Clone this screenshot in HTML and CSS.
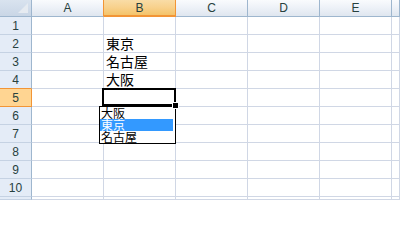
FILE: index.html
```html
<!DOCTYPE html>
<html lang="ja">
<head>
<meta charset="utf-8">
<link rel="stylesheet" href="styles.css">
</head>
<body>
<div class="sheet">
  <div class="hd corner"><span class="tri"></span></div>
  <div class="hd col before-sel">A</div>
  <div class="hd col sel">B</div>
  <div class="hd col">C</div>
  <div class="hd col">D</div>
  <div class="hd col">E</div>
  <div class="hd col"></div>

  <div class="rh">1</div><div class="c"></div><div class="c"></div><div class="c"></div><div class="c"></div><div class="c"></div><div class="c"></div>
  <div class="rh">2</div><div class="c"></div><div class="c txt">東京</div><div class="c"></div><div class="c"></div><div class="c"></div><div class="c"></div>
  <div class="rh">3</div><div class="c"></div><div class="c txt">名古屋</div><div class="c"></div><div class="c"></div><div class="c"></div><div class="c"></div>
  <div class="rh before-rsel">4</div><div class="c"></div><div class="c txt">大阪</div><div class="c"></div><div class="c"></div><div class="c"></div><div class="c"></div>
  <div class="rh rsel">5</div><div class="c"></div>
  <div class="c active">
    <span class="cursor"></span>
    <span class="handle"></span>
    <ul class="list">
      <li>大阪</li>
      <li class="on">東京</li>
      <li>名古屋</li>
    </ul>
  </div>
  <div class="c"></div><div class="c"></div><div class="c"></div><div class="c"></div>
  <div class="rh">6</div><div class="c"></div><div class="c"></div><div class="c"></div><div class="c"></div><div class="c"></div><div class="c"></div>
  <div class="rh">7</div><div class="c"></div><div class="c"></div><div class="c"></div><div class="c"></div><div class="c"></div><div class="c"></div>
  <div class="rh">8</div><div class="c"></div><div class="c"></div><div class="c"></div><div class="c"></div><div class="c"></div><div class="c"></div>
  <div class="rh">9</div><div class="c"></div><div class="c"></div><div class="c"></div><div class="c"></div><div class="c"></div><div class="c"></div>
  <div class="rh">10</div><div class="c"></div><div class="c"></div><div class="c"></div><div class="c"></div><div class="c"></div><div class="c"></div>
  <div class="rh"></div><div class="c"></div><div class="c"></div><div class="c"></div><div class="c"></div><div class="c"></div><div class="c"></div>
</div>
</body>
</html>
```
FILE: styles.css
```css
html, body {
  margin: 0;
  padding: 0;
  background: #ffffff;
  width: 400px;
  height: 200px;
  overflow: hidden;
}

.sheet {
  display: grid;
  grid-template-columns: 32px repeat(5, 72px) 1fr;
  grid-template-rows: 17px repeat(10, 18px) 1fr;
  width: 400px;
  height: 200px;
  font-family: "Liberation Sans", Arial, sans-serif;
}

.sheet > div {
  box-sizing: border-box;
}

.hd {
  background: linear-gradient(to bottom, #f9fbfd 0%, #eef2f8 45%, #dfe6ef 100%);
  border-right: 1px solid #9eb6ce;
  border-bottom: 1px solid #9eb6ce;
  color: #27413e;
  font-size: 12px;
  display: flex;
  align-items: center;
  justify-content: center;
  line-height: 1;
}

.corner {
  position: relative;
  background: linear-gradient(to bottom, #d9e3ef 0%, #c9d6e6 100%);
}

.corner .tri {
  position: absolute;
  right: 3px;
  bottom: 3px;
  width: 10px;
  height: 10px;
  background: #e6ebf1;
  clip-path: polygon(100% 0, 100% 100%, 0 100%);
}

.hd.before-sel {
  border-right-color: #f29536;
}

.hd.sel {
  background: linear-gradient(to bottom, #f9dca6 0%, #f8d08a 50%, #f3c266 100%);
  border-right-color: #f29536;
  border-bottom: 1px solid #f29536;
  box-shadow: inset 0 -1px 0 #f29536;
}

.rh {
  background: #e4ecf7;
  border-right: 1px solid #9eb6ce;
  border-bottom: 1px solid #c5d2e3;
  color: #27413e;
  font-size: 12px;
  display: flex;
  align-items: center;
  justify-content: center;
  line-height: 1;
}

.rh.before-rsel {
  border-bottom-color: #f29536;
}

.rh.rsel {
  background: #ffd592;
  border-right-color: #f29536;
  border-bottom-color: #f29536;
}

.c {
  border-right: 1px solid #d0d7e5;
  border-bottom: 1px solid #d0d7e5;
  background: #ffffff;
}

.txt {
  font-family: "Noto Sans CJK JP", sans-serif;
  font-size: 14px;
  line-height: 17px;
  padding-left: 2px;
  color: #000000;
  white-space: nowrap;
}

.active {
  position: relative;
}

.cursor {
  position: absolute;
  left: -2px;
  top: -1px;
  width: 74px;
  height: 18px;
  box-sizing: border-box;
  border: 2px solid #000000;
  z-index: 2;
}

.handle {
  position: absolute;
  left: 69px;
  top: 14px;
  width: 5px;
  height: 5px;
  background: #000000;
  outline: 1px solid #ffffff;
  z-index: 4;
}

.list {
  position: absolute;
  left: -5px;
  top: 17px;
  width: 77px;
  box-sizing: border-box;
  margin: 0;
  padding: 0 2px 0 0;
  list-style: none;
  background: #ffffff;
  border: 1px solid #000000;
  z-index: 3;
  font-family: "Noto Sans CJK JP", sans-serif;
  font-size: 12px;
}

.list li {
  height: 12px;
  line-height: 12px;
  padding-left: 1px;
  color: #000000;
  white-space: nowrap;
}

.list li.on {
  background: #3399ff;
  color: #ffffff;
}
```
